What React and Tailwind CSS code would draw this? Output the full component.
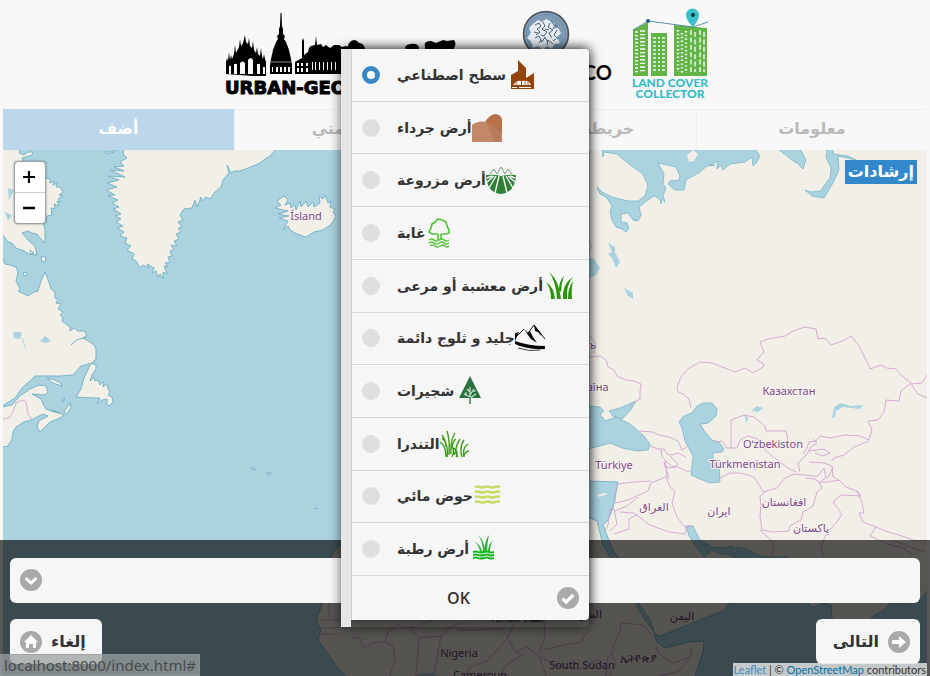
import React from "react";

const ARABIC = "font-['DejaVu_Sans','Noto_Sans',sans-serif]";

/* ---------- logos ---------- */

function Skyline() {
  return (
    <svg viewBox="225 10 236 66" className="h-[66px] w-[236px]" aria-hidden="true">
      <g fill="#000">
        <path d="M226 74V62l1-4 1 3 1-9 1 8 1-5 1 4 2-5 1-9 1 8 1-2 2-4 1-8 1 7 2-3 2-8 1 7 2 2 1-6 1 8 2 2 1-7 1 9 2 3 1-6 1 7 2 2 1-8 1 8 1 3 1-5 1 5 1 3v15z" />
        <path d="M270 74v-9l1-6 2-9 3-8 2-3-1-3 2-2v-5l1-3 .5-13h1l.5 13 1 3v5l2 2-1 3 2 3 3 8 2 9 1 6v9z" />
        <path d="M295 74V62l7-4V41l1-3 1 3v14l4-3 1-4 2-2 4-1 1-9 1 9 4-1 2 3 3-2 4 3 4-3 5 0 3 2 4-1 4 3V74z" />
        <path d="M342 74V50l6-4q1-5 6-6 3 0 5 3 5 0 6 6v25z" />
        <path d="M406 76V50q-3-5 5-6 7-1 8 4v28zM425 76V47q-2-6 6-6l5 2 7-3 4 1 7-1q3 4 0 8v28z" />
      </g>
      <path
        d="M229 74v-8h2v8zm5 0v-10h3v10zm6 0v-11q3-3 5 0v11zm8 0v-14q3-4 5 0v14zm9 0v-10h3v10zm6 0v-7h2v7zM272 72h1v-5h-1zm4 0h2v-5h-2zm4 0h2v-5h-2zm4 0h2v-5h-2zm4 0h2v-5h-2zM297 72h2v-4h-2zm4 0h2v-4h-2zm5 0h2v-4h-2zm-9-6h2v-3h-2zm4 0h2v-3h-2zm5 0h2v-3h-2zM312 70h1v-8h-1zm3 0h1v-8h-1zm4 0h1v-8h-1zm4 0h1v-8h-1zm4 0h1v-8h-1zm4 0h1v-8h-1zm4 0h1v-8h-1z"
        fill="#f8f8f8"
      />
      <path d="M271 62h20" stroke="#f8f8f8" strokeWidth=".6" fill="none" />
    </svg>
  );
}

function Seal() {
  return (
    <svg viewBox="0 0 48 48" className="h-12 w-12" aria-hidden="true">
      <circle cx="24" cy="24" r="22.4" fill="#86a3bb" stroke="#4d5862" strokeWidth="1.8" />
      <circle cx="24" cy="24" r="19.6" fill="#7d9bb4" stroke="#637c92" strokeWidth=".6" />
      <path d="M11 14l5-4 4 2 4-3 6 3 3 2-3 5 6-1 3 5-4 4 3 6-6 1-2 5-5-3-4 4-5-4-5 2-2-7-4-3 4-5-2-5z" fill="#e6edf2" />
      <path
        d="M13 15l4-2 2 3-4 3 3 3-4 3M21 12l2 4-3 3 5 3-3 4M28 13l-2 4 5 3-4 3 3 5M35 20l-3 5 4 4M13 28l4-2 3 6 3-5 3 6M12 22l4 1M25 35l1-5 5 4M29 11l3 4 3 1M17 33l2-3M23 19l4 1M19 25l3 1M31 31l3-2"
        fill="none"
        stroke="#4b5f72"
        strokeWidth="1"
      />
    </svg>
  );
}

function CollectorMark() {
  const floors = [0, 1, 2, 3, 4, 5, 6, 7, 8, 9, 10, 11];
  return (
    <svg viewBox="632 8 78 69" className="h-[69px] w-[78px]" aria-hidden="true">
      <path d="M634 30l15-8v54h-15zM652 33h16v43h-16zM675 25l33 3v48h-33z" fill="#62b447" />
      <g stroke="#f8f8f8">
        {floors.map((f) => (
          <path key={f} d={`M636 ${32 + f * 3.6}h3m2-1h5`} strokeWidth="1.4" />
        ))}
        {floors.slice(0, 9).map((f) => (
          <path key={f} d={`M654 ${38 + f * 4}h3m2 0h2m2 0h3`} strokeWidth="1.4" />
        ))}
        <path d="M679 30v42M683 33v40M687 31v42" strokeWidth="2.4" strokeDasharray="1.4 2.4" />
        <path d="M692 30v42M696 32v40M701 30v42M705 32v40" strokeWidth="1.4" strokeDasharray="5 2.4" />
      </g>
      <path d="M634 30l15-9 45 6 15-5" fill="none" stroke="#39799b" strokeWidth=".8" />
      <circle cx="649" cy="21" r="2" fill="#20628a" />
      <path d="M694 27q-7-7-7-12a6.5 6.5 0 0 1 13 0q0 5-6 12z" fill="#39c0c8" />
      <circle cx="694" cy="15" r="2" fill="#123043" />
    </svg>
  );
}

/* ---------- map ---------- */

const BORDERS = [
  "M3 419l6-1 4-6 3-9 6-3 4 2 2 12 4 6",
  "M589 357l11-1 6 4 2 7 6 3 3 6 9 4 8 1 7 3-1 8 0 7-7 4-3 4",
  "M589 240l3 5-3 6M589 335l6 7-1 12",
  "M640 431l12 1 7 3 10 2 9 4 4 9 5-3M650 446l8 3 6 0 3 5 5 1 6-2 8 4M661 450l1 7 7 7 6 4 3-4-8-8M664 466l6 2 6-2 10 5 5 0M664 462l4 12 0 5",
  "M691 408L689 399 683 394 678 392 677 387 681 377 688 369 700 362 712 363 735 372 745 368 753 373 763 367 764 364 757 360 764 352 760 342 768 339 785 336 793 331 805 327 816 329 818 339 825 338 831 345 845 340 851 336 859 346 866 360 870 369 881 365 887 368 896 369 902 376 911 383 901 391 899 401 886 400 884 412 878 420 868 421 872 430 869 440 860 436 845 435 830 438 820 436 816 441 809 442 806 450 803 454",
  "M911 384l11-1 5-8M911 384l7 10 9 4",
  "M731 449V420l13-5 10 2 11 9 1 5 20 0 2 10 0 6M716 442l6-1 5 7 10 0 3-8 8-4 10 3 8 12 10 8 12 9 8 4",
  "M720 478l10-5 11 0 13 4 4 6 5 9 14-4 8-10 9-4 20 2 4 0 6-8 2 9",
  "M800 472l-2-9 9-9 4-7 6-4 -4-4M809 462l16 1 8 4-4 9-8 5M809 451l15-2 6 4-7 3-8-3M832 461l2-3 10-3 10-8 15-6",
  "M832 467l1 10 6 3-11 2-9 0-4-3-10-1",
  "M819 482l3 6-5 4-4 14-10 6-2 8-11 6-1 5-16 1-11-2-2-14 1-10-1-10 5-4",
  "M760 530l11 10 3 10-4 7M839 480l7 7 11 4 4 5-20-1-8 7 9 12-5 8-11 12-5 13 4 15 14 11",
  "M857 491l5 12 2 10-5 0 4 9 13 5 9 4 17 5 14 5 15-1M876 527l-6 9 17 8 17 4 9 7M890 546l5-5 12 5 18 6",
  "M618 483l-3 10 0 10 13-3 20-9 3-8 10-4 6-3-2-15M618 484l16-2 17-1M666 477l4 10 5 4-3 12 5 14 11 14M615 511l12-5 11-9M620 512l14 1 16 12 19 7 16 2 2-8 5 0M614 534l15-5 0-10 9-5",
  "M610 531l7-7-3-15-4 0-2 16-3 5",
  "M621 623l-1 8-9 20 5 14-8 11M622 623l21 2 13 15M656 645l2 8 15 10 18-6-12 14-19 5M620 588l30-3 30 12M691 648l0 8",
  "M606 676l1-17 9-10",
  "M316 620h34l9-10M316 628h16l7-1M318 634l22 0M329 618l0-30 14-12",
  "M352 638l8 0 3 10 9-5 12-1 9 4 2 14-5 16M385 642l3-10 9-7 14 3 8 10-3 38M411 628l22-8M419 638l22-2 9-9 16-6M441 636l-7 40M456 630l21 0 25-1 6 9-11 12-10 11-17 6-6 9M508 638l7-18M508 638l7 14 8 3-16 9-7 12M515 652l11-5 13 9 7 20M539 652l6-15-1-17M543 650l21-5 17-3 7-12M539 656l18 10 22 3 20-10",
];

function WorldMap() {
  return (
    <svg
      viewBox="3 150 924 526"
      preserveAspectRatio="xMinYMin slice"
      className="h-full w-full"
      role="img"
      aria-label="Map"
    >
      <rect x="3" y="150" width="4000" height="4000" fill="#aad3df" />
      <g fill="#f2efe9" stroke="#6fb0c3" strokeWidth=".9" strokeLinejoin="bevel">
        <path d="M2 149H20L19 153 24 155 28 152 33 152 32 155 26 157 22 158 24 162 30 166 46 178 50 179 50 183 54 181 53 185 57 183 56 187 60 187 63 192 59 195 63 196 58 199 61 202 57 201 59 206 54 204 55 209 51 208 52 215 47 216 46 222 43 222 45 230 45 243 40 238 37 234 32 233 28 231 22 233 30 242 35 246 37 255 29 254 24 251 16 248 12 243 8 242 2 234z" />
        <path d="M41 257l4-1 1 5-4 1zM24 272l3 1-1 3-3-1zM30 250l4 3-3 1z" />
        <path d="M2 256L5 264 10 265 16 267 18 272 16 281 20 289 18 291 28 296 34 292 38 291 41 281 45 272 49 282 51 289 55 292 55 298 58 299 56 303 61 304 58 309 63 312 60 315 63 317 62 321 66 324 70 327 70 331 74 328 78 331 84 331 87 335 83 338 90 342 94 345 96 349 96 359 92 363 81 366 73 375 60 376 35 376 30 381 22 388 15 398 2 406z" />
        <path d="M2 407L12 405 20 396 30 389 39 385 46 386 48 392 45 395 32 394 41 399 43 404 46 409 54 412 60 413 52 410 64 415 60 418 50 422 45 427 40 432 37 427 39 421 48 416 43 414 31 420 24 422 16 427 13 432 12 439 8 446 2 447z" />
        <path d="M91 363L96 365 96 369 92 375 90 381 94 377 95 381 98 380 100 385 104 381 103 387 107 384 108 389 110 392 108 395 112 397 113 402 109 406 107 404 107 399 102 400 97 404 100 398 96 398 76 397 81 389 84 378z" />
        <path d="M64 412l6-9 1 5-5 6zM47 378l5 1 9 4 1 3-9-3zM62 400l3-2-2 4z" />
        <path d="M124 149H276L270 156 258 164 248 168 240 171 234 171 231 173 227 165 229 173 223 180 221 187 215 192 210 199 206 197 202 201 201 197 197 207 195 200 192 208 184 209 180 215 183 220 178 222 182 227 178 228 181 232 176 234 179 239 174 241 177 246 171 245 174 250 170 251 172 256 168 257 170 262 165 263 168 267 164 266 167 274 163 272 163 279 160 274 158 277 156 271 152 273 154 268 147 264 149 268 143 265 140 268 136 261 132 259 134 254 127 250 131 246 125 243 127 238 120 236 124 232 117 228 123 226 116 222 121 219 115 216 121 214 113 209 119 207 112 203 118 200 108 196 115 195 106 190 117 187 107 183 119 180 108 176 125 177 110 170 124 171 114 167 124 166 120 162 127 158 123 154z" />
        <path d="M105 152h6l3-2v2l-6 2z" />
        <path d="M275 208L281 205 277 201 284 196 288 200 285 205 290 203 291 208 295 205 296 210 300 201 301 207 306 201 308 207 313 202 314 207 320 203 319 196 323 199 325 195 328 203 331 201 330 207 335 209 333 212 336 216 333 222 329 226 323 230 314 232 306 237 297 234 290 230 288 226 283 230 288 221 279 218 289 216 278 214 288 211z" />
        <path d="M252 467l4 3-4-1zM266 473l5 0-2 2zM314 508l4 1" />
        <path d="M341 544L335 550 329 560 328 585 324 596 322 605 316 620 321 630 318 640 325 650 332 660 341 672 350 680H709L695 676 703 652 704 641 690 642 665 648 657 642 654 632 640 612 634 600 627 590 612 560 603 545 600 533 597 521 590 518 560 516 500 510 470 490 420 495 380 505 355 530z" />
        <path d="M589 149H928V590L920 600 907 604 890 603 884 610 872 617 868 626 860 645 850 676 843 665 833 630 831 605 823 603 812 608 798 585 790 558 780 557 760 556 747 549 736 547 738 554 750 575 755 590 728 604 725 610 700 620 660 636 655 634 650 620 640 605 628 575 612 548 603 525 608 520 613 508 618 482 589 481z" />
      </g>
      <g fill="#aad3df" stroke="#7ab6c6" strokeWidth=".8" strokeLinejoin="bevel">
        <path d="M602 149L603 157 604 152 617 154 624 160 633 167 643 174 648 186 645 196 638 201 628 201 612 197 602 192 597 187 600 194 607 198 612 206 610 212 612 220 616 227 622 229 626 232 629 228 627 223 621 222 621 214 628 213 633 220 638 221 641 215 639 207 645 202 652 197 655 196 660 200 661 204 662 199 665 202 663 196 666 188 663 184 664 174 658 163 667 165 676 167 680 176 679 180 670 181 668 184 675 190 684 190 686 180 700 172 707 166 715 165 710 165 718 161 717 169 721 165 723 170 730 164 745 162 752 157 753 166 757 162 760 156 755 149z" />
        <path d="M778 149H800L806 160 803 169 798 164 792 160zM827 149H833V154L848 156 856 160 838 156 839 170 833 183 824 198 812 196 805 190 810 192 821 191 823 187 830 178 831 168 826 157z" />
        <path d="M697 406L703 403 712 403 717 409 716 416 708 423 700 424 705 432 712 440 719 442 724 449 722 452 713 453 713 460 719 466 720 482 710 483 700 479 691 475 693 456 685 441 682 428 679 422 684 416 692 413z" />
        <path d="M588 406L600 407 604 411 600 414 605 421 616 417 630 424 643 435 650 444 648 450 637 451 622 448 610 443 600 446 588 449zM609 411L620 408 636 401 630 411 622 419 613 416z" />
        <path d="M686 526H693L700 540 712 547 722 548 732 546 738 550 734 556 722 554 712 550 704 557 697 548 689 536z" />
      </g>
      <path d="M734 547l13 2 13 7 27 0 4 4 9 35-40 8-12-25-12-17-8-6-7-2z" fill="#aad3df" />
      <g fill="#aad3df">
        <path d="M415 677l5-4 14 0 6 4zM608 243l7 4 0 5 5 10-4 6-4-10-4-4 4-2zM624 288l9 5 0 6-5-3zM588 257l6 2 6 9-4 7-8 4zM832 418l2-11 7-4 10 3 12-1-3 4-17-2-7 4-1 6zM752 410l5-4 6 2-5 4-5-1zM745 414l3 4-2 6M8 188l6 2-5 10zM5 212l7 3-4 6zM13 332l9 0-2 7-6-1zM40 341l5-5 6 5-6 2z" />
        <path d="M22 338l4 11" stroke="#aad3df" />
      </g>
      <path d="M597 495l8-2 3 1-9 3zM687 155l6-5 5 4-4 7-5 1z" fill="#f2efe9" />
      <path d="M71 345l6-5 9-3" stroke="#6fb0c3" fill="none" />
      <g fill="none" stroke="#cfa5cd" strokeWidth=".9">
        {BORDERS.map((d) => (
          <path key={d} d={d} />
        ))}
      </g>
      <g
        textAnchor="middle"
        fill="#7b4a85"
        stroke="#f7f4f0"
        strokeWidth="2"
        paintOrder="stroke"
        className="font-['Noto_Sans','DejaVu_Sans',sans-serif] text-[11px]"
      >
        <text x="306" y="220">Ísland</text>
        <text x="789" y="395">Казахстан</text>
        <text x="773" y="448">Oʻzbekiston</text>
        <text x="745" y="468">Türkmenistan</text>
        <text x="614" y="469">Türkiye</text>
        <text x="588" y="391">Україна</text>
        <text x="572" y="349">Беларусь</text>
        <text x="654" y="511">العراق</text>
        <text x="719" y="515">ایران</text>
        <text x="784" y="506">افغانستان</text>
        <text x="811" y="532">پاکستان</text>
        <text x="575" y="552">مصر</text>
      </g>
      <g textAnchor="middle" fill="#5f3a68" className="font-['Noto_Sans','DejaVu_Sans',sans-serif] text-[11px]">
        <text x="583" y="618">السودان</text>
        <text x="682" y="620">اليمن</text>
        <text x="517" y="622">Tchad تشاد</text>
        <text x="638" y="662">ኢትዮጵያ</text>
        <text x="582" y="669">South Sudan</text>
        <text x="459" y="657">Nigeria</text>
        <text x="480" y="679">Cameroun</text>
      </g>
    </svg>
  );
}

/* ---------- land cover icons ---------- */

const box = "h-[30px] w-[30px] shrink-0";

function Artificial() {
  return (
    <svg viewBox="0 0 30 30" className={box} aria-hidden="true">
      <path d="M5 29V15l7-4V0l8 8v10l8-5v16z" fill="#93440b" />
      <path d="M7 25q4-5 8-4v4zM16 21q7-1 9 4h-9zM6 27h5v1H6zM13 27h12v1H13z" fill="#f6f6f6" />
      <path d="M10 25v-3M19 25v-4M22 25v-3" stroke="#93440b" strokeWidth=".8" />
    </svg>
  );
}
function Bare() {
  return (
    <svg viewBox="0 0 30 30" className={box} aria-hidden="true">
      <path d="M13 29V9q5-8 11-8 5 1 6 5v23z" fill="#b9714c" />
      <path d="M0 29V12q6-5 14-3 9 5 16 11v9z" fill="#c28868" />
      <path d="M14 8l6 6 9 -4v19H22z" fill="#b0704e" opacity=".5" />
    </svg>
  );
}
function Cultivated() {
  return (
    <svg viewBox="0 0 30 30" className={box} aria-hidden="true">
      <path d="M4 9l4-5 3 5 4-7 4 7 3-5 4 5" fill="none" stroke="#7d9c7d" strokeWidth="1" />
      <path d="M0 10q8-1 15 1 7-2 15-1-1 18-15 19Q1 28 0 10z" fill="#2f7f37" />
      <path d="M13 11L9 28M17 11l4 17M10 11L3 23M20 11l7 12M8 11l-7 6M22 11l7 6M1 13l5-2M29 13l-5-2" stroke="#f6f6f6" strokeWidth="1.4" />
    </svg>
  );
}
function Forest() {
  return (
    <svg viewBox="0 0 30 30" className={box} aria-hidden="true">
      <g fill="none" stroke="#55c53b" strokeWidth="1.7">
        <path d="M12 16H6l-3-2 2-4 1-4 3-2 3-3 4 1 4 2 1 4 2 4 0 3-3 1h-5M12 16v6M15 16v6" />
        <path d="M3 22q3-2 5 0t5 0 5 0 5 0M3 25q3-2 5 0t5 0 5 0 5 0M4 28q3-2 5 0t5 0 5 0 4 0" strokeWidth="1.3" />
      </g>
    </svg>
  );
}
function Grass() {
  return (
    <svg viewBox="0 0 30 30" className={box} aria-hidden="true">
      <path
        d="M8 28Q8 17 3 11q8 5 9 17zM14 28Q13 10 6 1q10 8 12 27zM16 19q0-9 5-14-3 8-3 16zM20 28Q19 13 30 6q-7 8-6 22zM25 28q0-12 5-18-2 8-1 18z"
        fill="#2c940b"
      />
    </svg>
  );
}
function Snow() {
  return (
    <svg viewBox="0 0 30 30" className={box} aria-hidden="true">
      <path d="M0 15L9 6M13 10l6-8 11 14" fill="none" stroke="#111" strokeWidth="1" />
      <path d="M9 6l4 4 2-2 3 6 4 6-6-4-3-4zM19 2l6 7 1 4-3-4-3-1zM0 10l4-1-4 9zM0 18q14 5 30 5v3Q12 27 0 21z" fill="#050505" />
      <path d="M3 25q12 4 22 2" stroke="#111" fill="none" strokeWidth=".8" />
    </svg>
  );
}
function Shrub() {
  return (
    <svg viewBox="0 0 30 30" className={box} aria-hidden="true">
      <path d="M16 0l11 22H5z" fill="#29743e" />
      <path d="M16 11v12M16 21l-6-3M16 19l4-6M16 22l6-4M16 16l-3-3M12 19v-3M19 15l3 0" stroke="#d7e6da" strokeWidth="1.1" fill="none" />
      <path d="M16 21v7" stroke="#29743e" strokeWidth="1.4" />
    </svg>
  );
}
function Tundra() {
  return (
    <svg viewBox="0 0 30 30" className={box} aria-hidden="true">
      <g fill="none" stroke="#419c18" strokeWidth="1.4">
        <path d="M7 28Q7 17 1 13M8 28Q10 15 3 9M10 26Q11 11 8 2M12 25Q11 12 16 4M13 18Q14 12 17 10M7 18Q7 11 3 6M13 28Q16 22 13 18M17 28Q20 22 14 19M19 28Q14 21 21 10M23 28Q20 18 25 11M25 28Q23 19 29 15M25 28q0-5 5-6M15 26l2-5" />
      </g>
    </svg>
  );
}
function Water() {
  return (
    <svg viewBox="0 0 30 30" className={box} aria-hidden="true">
      <g fill="none" stroke="#c6dc68" strokeWidth="2.6">
        {[6, 11, 16, 21].map((y) => (
          <path key={y} d={`M2 ${y}q3-1 5 0t5 0 5 0 5 0 5 0`} />
        ))}
      </g>
    </svg>
  );
}
function Wetland() {
  return (
    <svg viewBox="0 0 30 30" className={box} aria-hidden="true">
      <path d="M11 18Q10 11 5 7q7 4 8 11zM14 18Q14 7 9 1q7 6 7 17zM16 18Q15 7 20 1q-2 8-2 17zM19 18Q19 11 24 6q-3 5-3 12z" fill="#2fad35" />
      <path d="M4 18q3-1 5 0t6 0 5 0 5 0M4 21q3-1 5 0t6 0 5 0 5 0M4 24q3-1 5 0t6 0 5 0 5 0" fill="none" stroke="#18b526" strokeWidth="1.9" />
    </svg>
  );
}

const CLASSES = [
  { id: "artificial", label: "سطح اصطناعي", Icon: Artificial },
  { id: "bare", label: "أرض جرداء", Icon: Bare },
  { id: "cultivated", label: "أرض مزروعة", Icon: Cultivated },
  { id: "forest", label: "غابة", Icon: Forest },
  { id: "grass", label: "أرض معشبة أو مرعى", Icon: Grass },
  { id: "snow", label: "جليد و ثلوج دائمة", Icon: Snow },
  { id: "shrub", label: "شجيرات", Icon: Shrub },
  { id: "tundra", label: "التندرا", Icon: Tundra },
  { id: "water", label: "حوض مائي", Icon: Water },
  { id: "wetland", label: "أرض رطبة", Icon: Wetland },
];

/* ---------- round button glyphs ---------- */

function Disc({ children, className = "" }) {
  return (
    <svg viewBox="0 0 22 22" className={"h-[22px] w-[22px] shrink-0 " + className} aria-hidden="true">
      <circle cx="11" cy="11" r="11" fill="#a9a9a9" />
      {children}
    </svg>
  );
}

function Tabs() {
  const tabs = ["أضف", "مساهمتي", "خريطة الأرض", "معلومات"];
  return (
    <nav className={"mx-[3px] grid h-[41px] grid-cols-4 text-base font-bold " + ARABIC}>
      {tabs.map((t, i) => (
        <a
          key={t}
          href="#"
          className={
            "flex items-center justify-center pb-0.5 " +
            (i === 0 ? "bg-[#bcd6ec] text-white" : "border-t border-l border-[#eeeeee] text-[#b9b9b9]")
          }
        >
          {t}
        </a>
      ))}
    </nav>
  );
}

function ClassDialog() {
  return (
    <div
      role="dialog"
      aria-label="Land cover"
      className="absolute top-[49px] left-1/2 flex w-[248px] -translate-x-1/2 rounded-r shadow-[0_0_12px_rgba(0,0,0,0.6)]"
    >
      <div className="relative z-10 w-[10px] shrink-0 bg-[#e6e6e6]" />
      <form className="mb-[7px] flex-1 rounded-r border-l border-[#cfcfcf] bg-[#f6f6f6] shadow-[0_0_12px_rgba(0,0,0,0.6)]">
        <div className="grid h-[527px] grid-rows-10">
          {CLASSES.map(({ id, label, Icon }, i) => (
            <label
              key={id}
              htmlFor={id}
              className={"flex items-center border-b border-[#d8d8d8] pl-[10px] text-sm font-bold text-[#333] " + ARABIC}
            >
              <input
                id={id}
                type="radio"
                name="class"
                defaultChecked={i === 0}
                className="mr-[17px] h-[18px] w-[18px] shrink-0 appearance-none rounded-full bg-[#dfdfdf] checked:border-[5px] checked:border-[#3a87c8] checked:bg-white"
              />
              <span className="whitespace-nowrap">{label}</span>
              <Icon />
            </label>
          ))}
        </div>
        <button
          type="button"
          className="relative flex h-[44px] w-full items-center justify-center pr-6 font-['Open_Sans',sans-serif] text-base font-semibold text-[#333]"
        >
          OK
          <Disc className="absolute right-[10px]">
            <path d="M5.5 11.5l3.7 3.5 7-7" fill="none" stroke="#fff" strokeWidth="3.2" />
          </Disc>
        </button>
      </form>
    </div>
  );
}

export default function App() {
  return (
    <div className="relative flex h-screen min-h-[660px] flex-col overflow-hidden bg-[#f8f8f8]">
      <header className="flex h-[109px] items-start justify-center gap-[21px] pt-2 pl-1">
        <div className="w-[236px] pt-0.5">
          <Skyline />
          <p className="font-['DejaVu_Sans',sans-serif] text-lg leading-6 font-bold whitespace-nowrap text-black [-webkit-text-stroke:1px_black]">
            URBAN-GEO BIG DATA
          </p>
        </div>
        <div className="flex w-[128px] flex-col items-center pt-0.5 text-black">
          <Seal />
          <p className="font-['Lato',sans-serif] text-xl leading-7 font-bold">POLITECNICO</p>
          <p className="font-['Lato',sans-serif] text-xs leading-3 font-bold">MILANO 1863</p>
        </div>
        <div className="flex w-[78px] flex-col items-center">
          <CollectorMark />
          <p className="text-center font-['Lato',sans-serif] text-xs leading-[11px] font-black whitespace-nowrap text-[#37bcc6]">
            LAND COVER
            <br />
            COLLECTOR
          </p>
        </div>
      </header>

      <Tabs />

      <main className="relative min-h-0 flex-1">
        <div className="h-full px-[3px]">
          <WorldMap />
        </div>

        <div className="absolute top-[11px] left-[14px] flex w-8 flex-col overflow-hidden rounded border border-[#9aa5a8] bg-white shadow-[0_0_2px_rgba(0,0,0,0.5)]">
          <button type="button" aria-label="Zoom in" className="flex h-[31px] items-center justify-center border-b border-[#ccc] pr-0.5">
            <svg viewBox="0 0 12 12" className="h-3 w-3"><path d="M6 0v12M0 6h12" stroke="#000" strokeWidth="2.2" /></svg>
          </button>
          <button type="button" aria-label="Zoom out" className="flex h-[30px] items-center justify-center pr-0.5">
            <svg viewBox="0 0 12 12" className="h-3 w-3"><path d="M0 6h12" stroke="#000" strokeWidth="2.6" /></svg>
          </button>
        </div>

        <button
          type="button"
          className={"absolute top-[10px] right-[13px] h-6 bg-[#3388cc] px-[3px] text-base leading-6 font-bold text-white " + ARABIC}
        >
          إرشادات
        </button>

        <section className="absolute inset-x-0 bottom-0 flex h-[136px] flex-col gap-4 bg-black/65 px-[10px] pt-[18px]">
          <div className="relative">
            <select
              aria-label="Land cover class"
              className="h-[45px] w-full appearance-none rounded-md bg-[#f6f6f6] pl-10"
              defaultValue=""
            >
              <option value=""></option>
            </select>
            <Disc className="pointer-events-none absolute top-[11px] left-[10px]">
              <path d="M5.5 9l5.5 5 5.5-5" fill="none" stroke="#fff" strokeWidth="3" />
            </Disc>
          </div>
          <div className={"flex justify-between text-base font-bold text-[#333] " + ARABIC}>
            <button type="button" className="flex h-[45px] items-center gap-[9px] rounded-md bg-[#f6f6f6] pr-4 pl-[10px]">
              <Disc>
                <path d="M11 4l7 7h-2v6h-3v-4H9v4H6v-6H4z" fill="#fff" />
              </Disc>
              إلغاء
            </button>
            <button type="button" className="flex h-[45px] items-center gap-[9px] rounded-md bg-[#f6f6f6] pr-[10px] pl-[17px]">
              التالى
              <Disc>
                <path d="M4 9h7V5l7 6-7 6v-4H4z" fill="#fff" />
              </Disc>
            </button>
          </div>
        </section>

        <p className="absolute right-[3px] bottom-0 bg-[#e8e8e8]/80 px-px font-['Lato',sans-serif] text-[11px] leading-[13px] text-[#333]">
          <a href="#" className="text-[#3a8cc4]">Leaflet</a> | ©{" "}
          <a href="#" className="text-[#0070a3]">OpenStreetMap</a> contributors
        </p>
        <p className="absolute bottom-0 left-0 h-[22px] border border-[#8d9798]/60 bg-[#9a9f9f]/75 px-[3px] font-['Noto_Sans',sans-serif] text-[15px] leading-5 text-[#474b4c]">
          localhost:8000/index.html#
        </p>
      </main>

      <ClassDialog />
    </div>
  );
}
